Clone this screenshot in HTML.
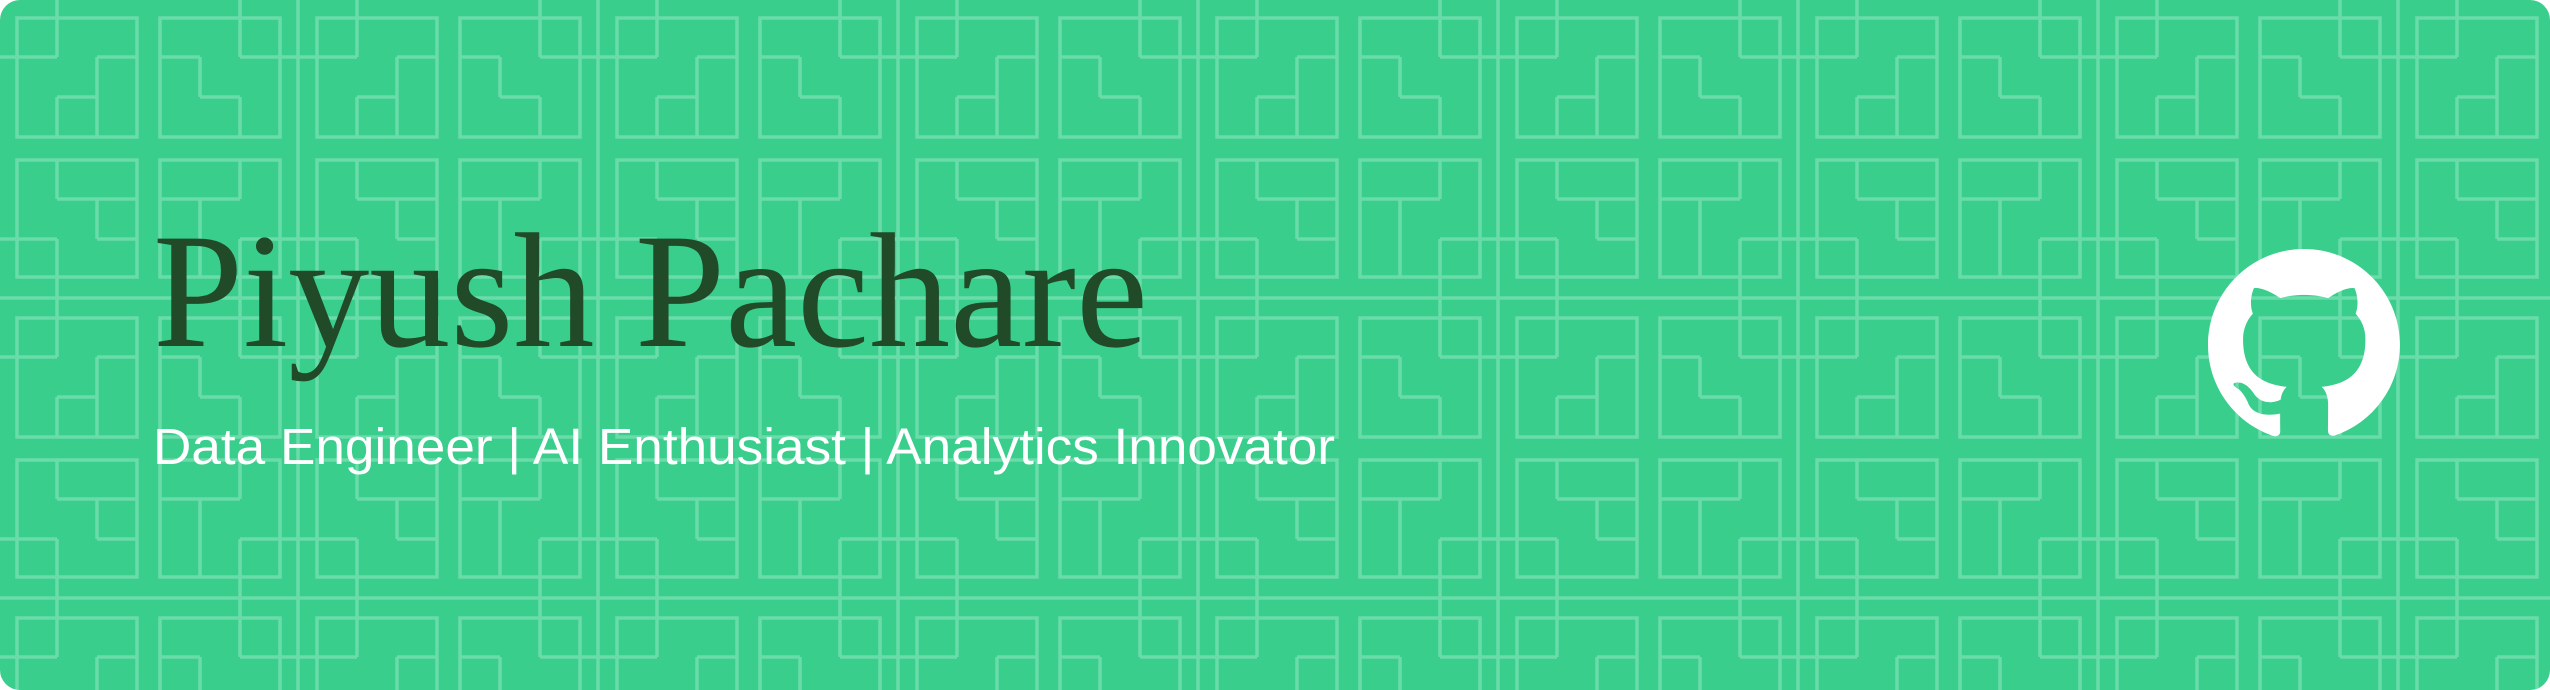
<!DOCTYPE html>
<html><head><meta charset="utf-8"><style>
html,body{margin:0;padding:0;background:#fff;width:2550px;height:690px;overflow:hidden}
svg{display:block}
</style></head><body>
<svg width="2550" height="690" viewBox="0 0 2550 690" xmlns="http://www.w3.org/2000/svg">
<defs>
<pattern id="p" patternUnits="userSpaceOnUse" width="300" height="300">
<g fill="none" stroke="#6ADCAA" stroke-width="3.5">
<rect x="17" y="18" width="120" height="119"/>
<rect x="160" y="18" width="120" height="119"/>
<rect x="17" y="160" width="120" height="117"/>
<rect x="160" y="160" width="120" height="117"/>
<path d="M298 0V300M0 298H300"/>
<path d="M57 0V57M0 57H57M97 57H137M97 57V137M57 97H97M57 97V137"/>
<path d="M160 57H200M200 57V97M200 97H240M240 97V137M240 0V57M240 57H300"/>
<path d="M57 160V199M57 199H137M97 199V239M97 239H137M0 239H57M57 239V300"/>
<path d="M240 160V199M160 199H240M200 199V277M240 239H300M240 239V300"/>
</g>
</pattern>
<clipPath id="c"><rect x="0" y="0" width="2550" height="690" rx="20" ry="20"/></clipPath>
</defs>
<g clip-path="url(#c)">
<rect width="2550" height="690" fill="#3ACE8D"/>
<rect width="2550" height="690" fill="url(#p)"/>
</g>
<text x="153" y="346" font-family="Liberation Serif, serif" font-size="164" fill="#214A28" textLength="995" lengthAdjust="spacingAndGlyphs">Piyush Pachare</text>
<text x="153" y="464" font-family="Liberation Sans, DejaVu Sans, sans-serif" font-size="51" fill="#ffffff" textLength="1182" lengthAdjust="spacingAndGlyphs">Data Engineer | AI Enthusiast | Analytics Innovator</text>
<g transform="translate(2208,249) scale(12)">
<path fill="#ffffff" d="M8 0C3.58 0 0 3.58 0 8c0 3.54 2.290 6.53 5.47 7.59.4.07.55-.17.55-.38 0-.19-.01-.82-.01-1.49-2.01.37-2.53-.49-2.69-.94-.09-.23-.48-.94-.82-1.13-.28-.15-.68-.52-.01-.53.63-.01 1.08.58 1.23.78.72 1.21 1.87.87 2.33.66.07-.52.28-.87.51-1.07-1.78-.2-3.64-.89-3.64-3.95 0-.87.31-1.59.82-2.15-.08-.2-.36-1.02.08-2.12 0 0 .67-.21 2.2.82.64-.18 1.32-.27 2-.27.68 0 1.36.09 2 .27 1.53-1.04 2.2-.82 2.2-.82.44 1.1.16 1.92.08 2.12.51.56.82 1.27.82 2.15 0 3.07-1.87 3.75-3.65 3.95.29.25.54.73.54 1.48 0 1.07-.01 1.93-.01 2.2 0 .21.15.46.55.38A8.013 8.013 0 0016 8c0-4.42-3.58-8-8-8z"/>
</g>
</svg>
</body></html>
